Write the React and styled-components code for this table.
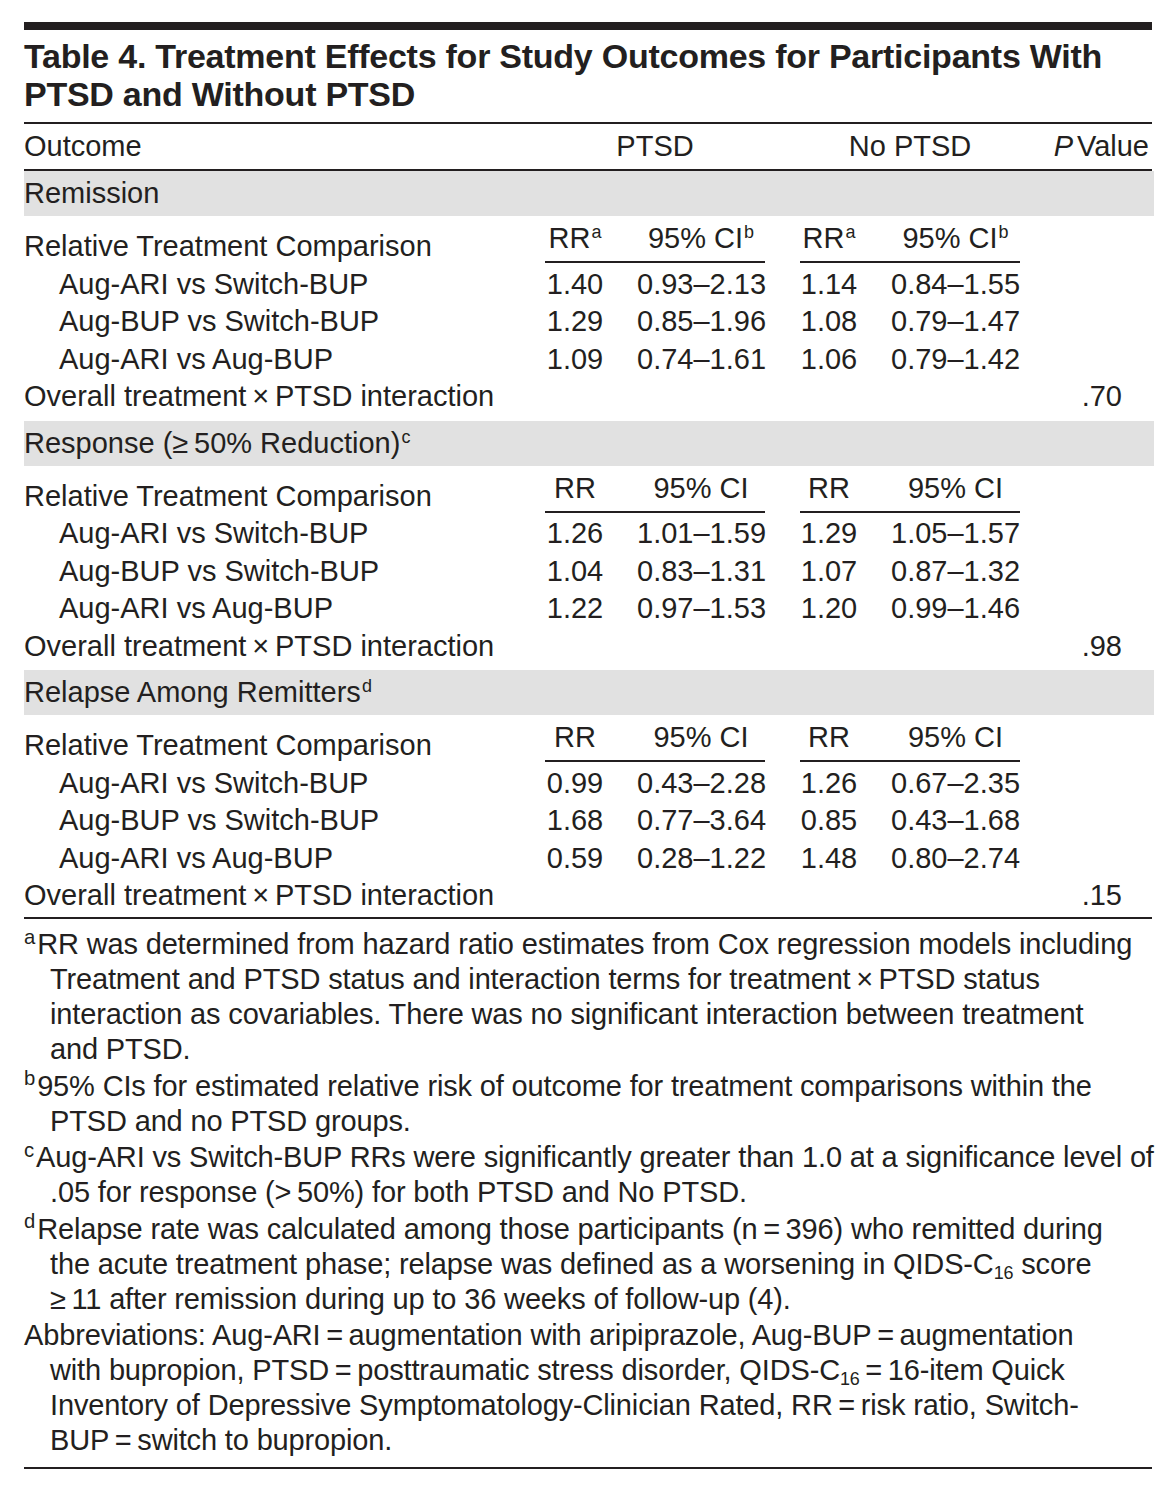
import React from "react";
import styled, { createGlobalStyle } from "styled-components";

const INK = "#231f20";

const GlobalStyle = createGlobalStyle`
  html, body { margin: 0; padding: 0; background: #ffffff; }
  body {
    font-family: "Liberation Sans", Arial, sans-serif;
    color: ${INK};
    -webkit-font-smoothing: antialiased;
  }
`;

const Page = styled.div`
  width: 1128px;
  padding: 22px 0 24px 24px;
`;

const TopRule = styled.div`
  height: 8px;
  background: ${INK};
`;

const Title = styled.h1`
  margin: 7px 0 9px;
  font-size: 34px;
  line-height: 38px;
  font-weight: 700;
  letter-spacing: -0.25px;
`;

const Table = styled.div`
  border-top: 2px solid ${INK};
  border-bottom: 2px solid ${INK};
  font-size: 29px;
`;

const Grid = styled.div`
  display: grid;
  grid-template-columns: 1fr 60px 160px 35px 58px 162px 132px;
  align-items: start;
`;

const HeadRow = styled(Grid)`
  line-height: 45px;
  border-bottom: 2px solid ${INK};
  align-items: center;
`;

const HeadCell = styled.div`
  grid-column: ${(p) => p.$col};
  text-align: ${(p) => p.$align || "left"};
  padding-right: ${(p) => p.$pr || 0}px;
  white-space: nowrap;
`;

const Italic = styled.span`
  font-style: italic;
  margin-right: 4px;
`;

const Band = styled.div`
  background: #e1e1e1;
  line-height: 45px;
  width: 1130px;
  white-space: nowrap;
`;

const Section = styled.div``;

const Body = styled.div`
  padding: 12px 0 ${(p) => (p.$last ? 2 : 5)}px;
`;

const Row = styled(Grid)`
  height: 37.5px;
  line-height: 37.5px;
`;

const Label = styled.div`
  grid-column: 1;
  padding-left: ${(p) => (p.$indent ? 35 : 0)}px;
  white-space: nowrap;
`;

const Num = styled.div`
  grid-column: ${(p) => p.$col};
  text-align: center;
  padding-left: ${(p) => p.$pl || 0}px;
  white-space: nowrap;
`;

const SubHead = styled.div`
  grid-column: ${(p) => p.$col};
  align-self: start;
  margin-top: -5px;
  line-height: 30px;
  padding: 0 0 8px ${(p) => p.$pl || 0}px;
  border-bottom: 2px solid ${INK};
  text-align: center;
  white-space: nowrap;
`;

const PVal = styled.div`
  grid-column: 7;
  text-align: right;
  padding-right: 30px;
`;

const Sup = styled.sup`
  font-size: 0.62em;
  line-height: 0;
  vertical-align: 0.55em;
  margin-left: 1px;
`;

const Sub = styled.sub`
  font-size: 0.62em;
  line-height: 0;
  vertical-align: -0.3em;
`;

const Notes = styled.div`
  padding: 8.5px 0 8.5px;
  border-bottom: 2px solid ${INK};
  font-size: 29px;
  line-height: 35px;
  letter-spacing: -0.15px;
`;

const Note = styled.div`
  padding-left: 26px;
  & + & {
    margin-top: 1.5px;
  }
`;

const NoteLine = styled.div`
  white-space: nowrap;
  margin-left: ${(p) => (p.$first ? -26 : 0)}px;
`;

const NoteMark = styled.sup`
  font-size: 0.7em;
  line-height: 0;
  vertical-align: 0.5em;
  margin-right: 2px;
`;

const sections = [
  {
    title: "Remission",
    mark: null,
    rrMark: "a",
    ciMark: "b",
    rows: [
      ["Aug-ARI vs Switch-BUP", "1.40", "0.93–2.13", "1.14", "0.84–1.55"],
      ["Aug-BUP vs Switch-BUP", "1.29", "0.85–1.96", "1.08", "0.79–1.47"],
      ["Aug-ARI vs Aug-BUP", "1.09", "0.74–1.61", "1.06", "0.79–1.42"],
    ],
    p: ".70",
  },
  {
    title: "Response (≥\u200950% Reduction)",
    mark: "c",
    rows: [
      ["Aug-ARI vs Switch-BUP", "1.26", "1.01–1.59", "1.29", "1.05–1.57"],
      ["Aug-BUP vs Switch-BUP", "1.04", "0.83–1.31", "1.07", "0.87–1.32"],
      ["Aug-ARI vs Aug-BUP", "1.22", "0.97–1.53", "1.20", "0.99–1.46"],
    ],
    p: ".98",
  },
  {
    title: "Relapse Among Remitters",
    mark: "d",
    rows: [
      ["Aug-ARI vs Switch-BUP", "0.99", "0.43–2.28", "1.26", "0.67–2.35"],
      ["Aug-BUP vs Switch-BUP", "1.68", "0.77–3.64", "0.85", "0.43–1.68"],
      ["Aug-ARI vs Aug-BUP", "0.59", "0.28–1.22", "1.48", "0.80–2.74"],
    ],
    p: ".15",
  },
];

const T = "\u2009";

const notes = [
  {
    mark: "a",
    lines: [
      "RR was determined from hazard ratio estimates from Cox regression models including",
      `Treatment and PTSD status and interaction terms for treatment${T}×${T}PTSD status`,
      "interaction as covariables. There was no significant interaction between treatment",
      "and PTSD.",
    ],
  },
  {
    mark: "b",
    lines: [
      "95% CIs for estimated relative risk of outcome for treatment comparisons within the",
      "PTSD and no PTSD groups.",
    ],
  },
  {
    mark: "c",
    lines: [
      "Aug-ARI vs Switch-BUP RRs were significantly greater than 1.0 at a significance level of",
      `.05 for response (>${T}50%) for both PTSD and No PTSD.`,
    ],
  },
  {
    mark: "d",
    lines: [
      `Relapse rate was calculated among those participants (n${T}=${T}396) who remitted during`,
      <>
        the acute treatment phase; relapse was defined as a worsening in QIDS-C<Sub>16</Sub> score
      </>,
      `≥${T}11 after remission during up to 36 weeks of follow-up (4).`,
    ],
  },
  {
    mark: null,
    lines: [
      `Abbreviations: Aug-ARI${T}=${T}augmentation with aripiprazole, Aug-BUP${T}=${T}augmentation`,
      <>
        with bupropion, PTSD{T}={T}posttraumatic stress disorder, QIDS-C<Sub>16</Sub>
        {T}={T}16-item Quick
      </>,
      `Inventory of Depressive Symptomatology-Clinician Rated, RR${T}=${T}risk ratio, Switch-`,
      `BUP${T}=${T}switch to bupropion.`,
    ],
  },
];

function TableSection({ s, last }) {
  return (
    <Section>
      <Band>
        {s.title}
        {s.mark && <Sup>{s.mark}</Sup>}
      </Band>
      <Body $last={last}>
        <Row>
          <Label>Relative Treatment Comparison</Label>
          <SubHead $col={2}>
            RR{s.rrMark && <Sup>{s.rrMark}</Sup>}
          </SubHead>
          <SubHead $col={3} $pl={32}>
            95% CI{s.ciMark && <Sup>{s.ciMark}</Sup>}
          </SubHead>
          <SubHead $col={5}>
            RR{s.rrMark && <Sup>{s.rrMark}</Sup>}
          </SubHead>
          <SubHead $col={6} $pl={33}>
            95% CI{s.ciMark && <Sup>{s.ciMark}</Sup>}
          </SubHead>
        </Row>
        {s.rows.map((r) => (
          <Row key={r[0]}>
            <Label $indent>{r[0]}</Label>
            <Num $col={2}>{r[1]}</Num>
            <Num $col={3} $pl={32}>
              {r[2]}
            </Num>
            <Num $col={5}>{r[3]}</Num>
            <Num $col={6} $pl={33}>
              {r[4]}
            </Num>
          </Row>
        ))}
        <Row>
          <Label>Overall treatment{T}×{T}PTSD interaction</Label>
          <PVal>{s.p}</PVal>
        </Row>
      </Body>
    </Section>
  );
}

export default function App() {
  return (
    <>
      <GlobalStyle />
      <Page>
        <TopRule />
        <Title>
          Table 4. Treatment Effects for Study Outcomes for Participants With PTSD and Without PTSD
        </Title>
        <Table>
          <HeadRow>
            <HeadCell $col={1}>Outcome</HeadCell>
            <HeadCell $col="2 / 4" $align="center">
              PTSD
            </HeadCell>
            <HeadCell $col="5 / 7" $align="center">
              No PTSD
            </HeadCell>
            <HeadCell $col={7} $align="right" $pr={3}>
              <Italic>P</Italic>Value
            </HeadCell>
          </HeadRow>
          {sections.map((s, i) => (
            <TableSection key={s.title} s={s} last={i === sections.length - 1} />
          ))}
        </Table>
        <Notes>
          {notes.map((n, i) => (
            <Note key={i}>
              {n.lines.map((l, j) => (
                <NoteLine key={j} $first={j === 0}>
                  {j === 0 && n.mark && <NoteMark>{n.mark}</NoteMark>}
                  {l}
                </NoteLine>
              ))}
            </Note>
          ))}
        </Notes>
      </Page>
    </>
  );
}
